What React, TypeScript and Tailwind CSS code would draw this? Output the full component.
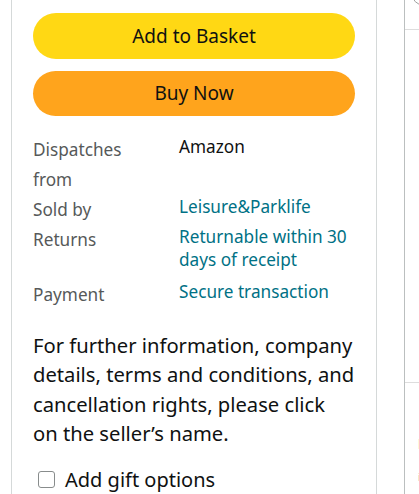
const rows = [
  { label: ["Dispatches", "from"], value: "Amazon", link: false },
  { label: ["Sold by"], value: "Leisure&Parklife", link: true },
  { label: ["Returns"], value: "Returnable within 30 days of receipt", link: true, extra: true },
  { label: ["Payment"], value: "Secure transaction", link: true },
];

export default function App() {
  return (
    <div
      className="flex h-[494px] w-[419px] overflow-hidden bg-white text-[#0f1111]"
      style={{ fontFamily: '"Noto Sans", Arial, sans-serif' }}
    >
      <div className="w-[11px] shrink-0" />

      <div className="flex w-[366px] shrink-0 flex-col border-x border-[#d5d9d9] px-[21px] pt-[13px]">
        <button className="h-[46px] w-full rounded-full bg-[#ffd814] text-[19px] text-[#0f1111]">
          Add to Basket
        </button>
        <button className="mt-[12px] h-[45px] w-full rounded-full bg-[#ffa41c] text-[19px] text-[#0f1111]">
          Buy Now
        </button>

        <div className="mt-[19px] text-[17.2px]">
          {rows.map((r) => (
            <div key={r.value} className={`flex ${r.extra ? "pb-[9px]" : ""}`}>
              <div className="w-[146px] shrink-0 leading-[30px] text-[#565959]">
                {r.label.map((l) => (
                  <div key={l}>{l}</div>
                ))}
              </div>
              <div className={`flex-1 leading-[23px] ${r.link ? "text-[#007185]" : "text-[#0f1111]"}`}>
                {r.value}
              </div>
            </div>
          ))}
        </div>

        <p className="mt-[21px] text-[20.2px] leading-[29.4px]">
          For further information, company details, terms and conditions, and cancellation rights, please click
          <br />
          on the seller’s name.
        </p>

        <label className="mt-[18px] flex items-center gap-[10px] pl-[5px] text-[20px] leading-[26px]">
          <span className="h-[17px] w-[17px] shrink-0 rounded-[3px] border border-[#888c8c] bg-white" />
          Add gift options
        </label>
      </div>

      <div className="w-[27px] shrink-0" />

      <div className="relative flex-1 border-l border-[#bbbfbf]">
        <div className="absolute -top-[21px] left-[6px] h-[27px] w-[27px] rounded-full border border-[#a0a0a0]" />
        <div className="mt-[29px] h-[353px] border-t border-[#dddddd]" />
        <div className="border-t border-[#dddddd] pt-[55px] pl-[13px] text-[14px] font-bold leading-[12px]">
          E
        </div>
        <div className="pt-[22px] pl-[13px] text-[10px] leading-[10px] text-[#999]">
          i
        </div>
      </div>
    </div>
  );
}
